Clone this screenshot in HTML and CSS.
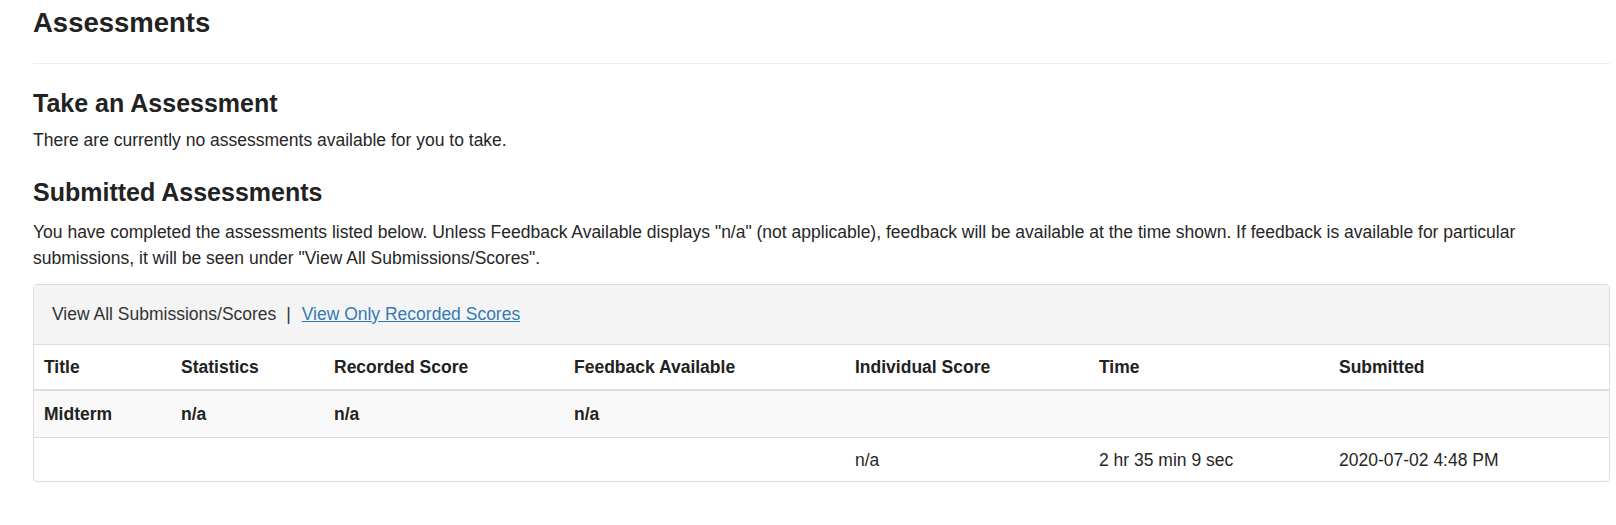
FILE: index.html
```html
<!DOCTYPE html>
<html lang="en">
<head>
<meta charset="utf-8">
<title>Assessments</title>
<link rel="stylesheet" href="styles.css">
</head>
<body>
<div class="page">
  <h2 class="page-title">Assessments</h2>
  <hr class="divider">
  <h3 class="section-title first">Take an Assessment</h3>
  <p class="note">There are currently no assessments available for you to take.</p>
  <h3 class="section-title">Submitted Assessments</h3>
  <p class="intro">You have completed the assessments listed below. Unless Feedback Available displays "n/a" (not applicable), feedback will be available at the time shown. If feedback is available for particular submissions, it will be seen under "View All Submissions/Scores".</p>
  <div class="panel">
    <div class="panel-heading">
      <span class="current">View All Submissions/Scores</span>
      <span class="sep">|</span>
      <a class="link" href="#">View Only Recorded Scores</a>
    </div>
    <table class="grid">
      <colgroup>
        <col class="c1"><col class="c2"><col class="c3"><col class="c4"><col class="c5"><col class="c6"><col class="c7">
      </colgroup>
      <thead>
        <tr>
          <th>Title</th>
          <th>Statistics</th>
          <th>Recorded Score</th>
          <th>Feedback Available</th>
          <th>Individual Score</th>
          <th>Time</th>
          <th>Submitted</th>
        </tr>
      </thead>
      <tbody>
        <tr class="summary">
          <td>Midterm</td>
          <td>n/a</td>
          <td>n/a</td>
          <td>n/a</td>
          <td></td>
          <td></td>
          <td></td>
        </tr>
        <tr class="detail">
          <td></td>
          <td></td>
          <td></td>
          <td></td>
          <td>n/a</td>
          <td>2 hr 35 min 9 sec</td>
          <td>2020-07-02 4:48 PM</td>
        </tr>
      </tbody>
    </table>
  </div>
</div>
</body>
</html>
```

FILE: styles.css
```css
html, body {
  margin: 0;
  padding: 0;
  background: #ffffff;
}

body {
  font-family: "Liberation Sans", Arial, sans-serif;
  font-size: 17.5px;
  color: #262626;
}

.page {
  padding: 8px 6px 0 33px;
}

.page-title {
  margin: 0;
  font-size: 27.5px;
  line-height: 30px;
  font-weight: bold;
  color: #222222;
}

.divider {
  margin: 25px 0 0 0;
  border: 0;
  border-top: 1px solid #eeeeee;
  height: 0;
}

.section-title {
  margin: 25px 0 0 0;
  font-size: 25px;
  line-height: 28px;
  font-weight: bold;
  color: #222222;
}

.note {
  margin: 10px 0 0 0;
  line-height: 26px;
}

.intro {
  margin: 13px 0 0 0;
  line-height: 26px;
}

.panel {
  margin-top: 13px;
  border: 1px solid #dddddd;
  border-radius: 4px;
  overflow: hidden;
}

.panel-heading {
  background: #f4f4f4;
  padding: 19px 18px 20px 18px;
  line-height: 20px;
  border-bottom: 1px solid #dddddd;
  color: #333333;
}

.sep {
  margin: 0 6px 0 5px;
  color: #333333;
}

.link {
  color: #337ab7;
  text-decoration: underline;
}

.grid {
  width: 100%;
  border-collapse: collapse;
  table-layout: fixed;
}

.c1 { width: 137px; }
.c2 { width: 153px; }
.c3 { width: 240px; }
.c4 { width: 281px; }
.c5 { width: 244px; }
.c6 { width: 240px; }
.c7 { width: auto; }

.grid th {
  text-align: left;
  font-weight: bold;
  padding: 12px 10px 12px 10px;
  line-height: 20px;
  border-bottom: 2px solid #dddddd;
  color: #222222;
}

.grid td {
  padding: 13px 10px 13px 10px;
  line-height: 20px;
  border-top: 1px solid #dddddd;
  color: #262626;
}

.grid tr.detail td {
  padding: 12px 10px 11px 10px;
}

.grid tr.summary td {
  background: #f9f9f9;
  font-weight: bold;
  color: #222222;
}
```
